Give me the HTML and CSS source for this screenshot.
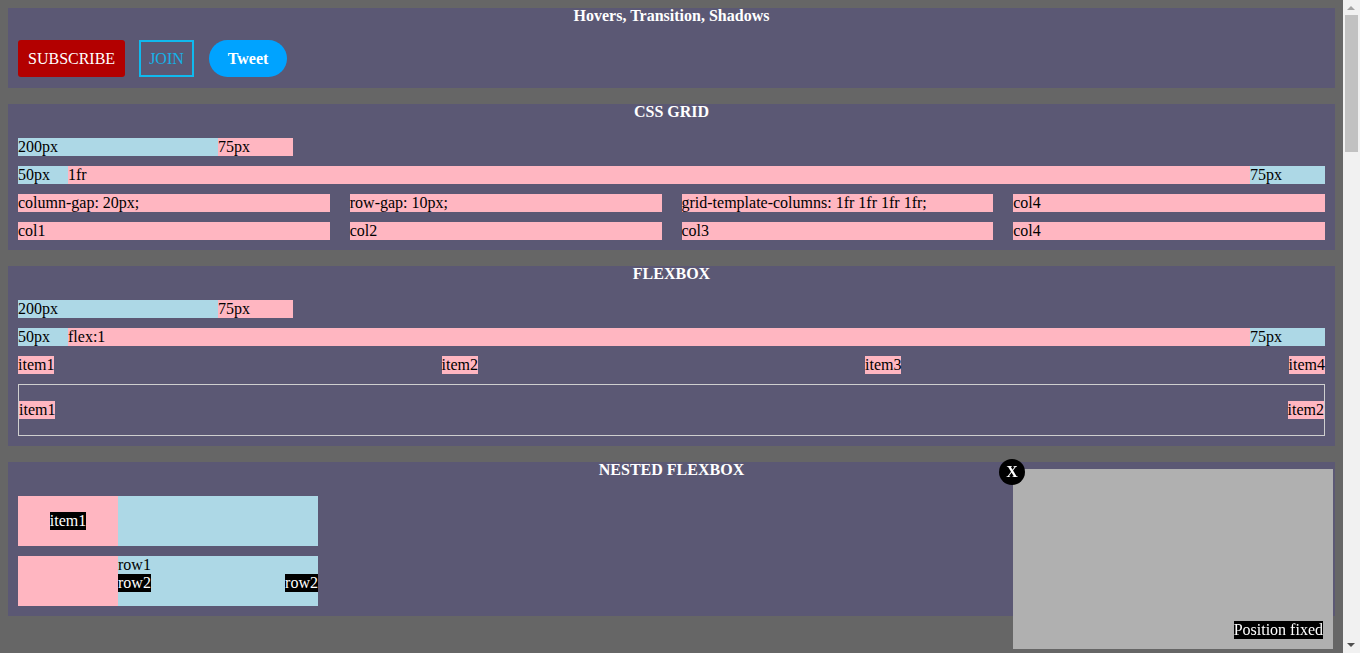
FILE: index.html
```html
<!DOCTYPE html>
<html lang="en">
<head>
<meta charset="utf-8">
<title>CSS Playground</title>
<link rel="stylesheet" href="styles.css">
</head>
<body>
  <section class="panel panel-hover">
    <h2 class="panel-title">Hovers, Transition, Shadows</h2>
    <div class="btn-row">
      <button class="btn btn-subscribe">SUBSCRIBE</button>
      <button class="btn btn-join">JOIN</button>
      <button class="btn btn-tweet">Tweet</button>
    </div>
  </section>

  <section class="panel">
    <h2 class="panel-title">CSS GRID</h2>
    <div class="grid grid-a">
      <div class="blue">200px</div>
      <div class="pink">75px</div>
    </div>
    <div class="grid grid-b">
      <div class="blue">50px</div>
      <div class="pink">1fr</div>
      <div class="blue">75px</div>
    </div>
    <div class="grid grid-c">
      <div class="pink">column-gap: 20px;</div>
      <div class="pink">row-gap: 10px;</div>
      <div class="pink">grid-template-columns: 1fr 1fr 1fr 1fr;</div>
      <div class="pink">col4</div>
      <div class="pink">col1</div>
      <div class="pink">col2</div>
      <div class="pink">col3</div>
      <div class="pink">col4</div>
    </div>
  </section>

  <section class="panel">
    <h2 class="panel-title">FLEXBOX</h2>
    <div class="flex">
      <div class="blue w200">200px</div>
      <div class="pink w75">75px</div>
    </div>
    <div class="flex">
      <div class="blue w50">50px</div>
      <div class="pink grow">flex:1</div>
      <div class="blue w75">75px</div>
    </div>
    <div class="flex between">
      <div class="pink">item1</div>
      <div class="pink">item2</div>
      <div class="pink">item3</div>
      <div class="pink">item4</div>
    </div>
    <div class="flex between boxed">
      <div class="pink">item1</div>
      <div class="pink">item2</div>
    </div>
  </section>

  <section class="panel">
    <h2 class="panel-title">NESTED FLEXBOX</h2>
    <div class="nest">
      <div class="nest-left center"><span class="tag">item1</span></div>
      <div class="nest-right"></div>
    </div>
    <div class="nest">
      <div class="nest-left"></div>
      <div class="nest-right column">
        <div class="plain">row1</div>
        <div class="split">
          <span class="tag">row2</span>
          <span class="tag">row2</span>
        </div>
      </div>
    </div>
  </section>

  <div class="fixed-box">
    <span class="close">X</span>
    <span class="tag fixed-label">Position fixed</span>
  </div>

  <div class="scrollbar" aria-hidden="true">
    <span class="sb-up"></span>
    <span class="sb-thumb"></span>
    <span class="sb-down"></span>
  </div>
</body>
</html>
```
FILE: styles.css
```css
html {
  background: #666666;
}
body {
  margin: 8px 25px 8px 8px;
  min-height: 2934px;
  font-family: "Liberation Serif", "Times New Roman", serif;
  font-size: 16px;
  line-height: 18px;
  color: #000;
}
.panel {
  background: #5b5874;
  padding: 0 10px 10px;
  margin-bottom: 16px;
}
.panel-title {
  margin: 0 0 16px;
  font-size: 16px;
  line-height: 15px;
  padding-bottom: 3px;
  font-weight: bold;
  color: #fff;
  text-align: center;
}
.panel-hover .panel-title {
  margin-bottom: 14px;
}
.panel-hover {
  padding-bottom: 11px;
}
.btn-row {
  display: flex;
  gap: 14px;
  align-items: center;
}
.btn {
  font-family: "Liberation Serif", "Times New Roman", serif;
  font-size: 16px;
  line-height: 19px;
  margin: 0;
  cursor: pointer;
}
.btn-subscribe {
  background: #b30000;
  color: #fff;
  border: none;
  border-radius: 3px;
  padding: 9px 10px;
}
.btn-join {
  background: transparent;
  color: #14b2e8;
  border: 2px solid #0fb9ee;
  padding: 7px 8px;
}
.btn-tweet {
  background: #00a3ff;
  color: #fff;
  font-weight: bold;
  border: none;
  border-radius: 19px;
  padding: 9px 19px;
  margin-left: 1px;
}
.blue { background: #add8e6; }
.pink { background: #ffb6c1; }
.grid {
  display: grid;
  margin-bottom: 10px;
}
.grid:last-child { margin-bottom: 0; }
.grid-a { grid-template-columns: 200px 75px; }
.grid-b { grid-template-columns: 50px 1fr 75px; }
.grid-c {
  grid-template-columns: 1fr 1fr 1fr 1fr;
  column-gap: 20px;
  row-gap: 10px;
}
.flex {
  display: flex;
  margin-bottom: 10px;
}
.flex:last-child { margin-bottom: 0; }
.w200 { width: 200px; }
.w75 { width: 75px; }
.w50 { width: 50px; }
.grow { flex: 1; }
.between { justify-content: space-between; }
.boxed {
  border: 1px solid #cfcfcf;
  height: 50px;
  align-items: center;
}
.nest {
  display: flex;
  height: 50px;
  margin-bottom: 10px;
}
.nest:last-child { margin-bottom: 0; }
.nest-left {
  width: 100px;
  background: #ffb6c1;
}
.nest-right {
  width: 200px;
  background: #add8e6;
}
.center {
  display: flex;
  align-items: center;
  justify-content: center;
}
.column {
  display: flex;
  flex-direction: column;
}
.split {
  display: flex;
  justify-content: space-between;
}
.tag {
  background: #000;
  color: #fff;
}
.fixed-box {
  position: fixed;
  right: 27px;
  bottom: 4px;
  width: 320px;
  height: 180px;
  background: #b0b0b0;
}
.close {
  position: absolute;
  top: -10px;
  left: -14px;
  width: 26px;
  height: 26px;
  border-radius: 50%;
  background: #000;
  color: #fff;
  font-weight: bold;
  font-size: 16px;
  line-height: 26px;
  text-align: center;
}
.fixed-label {
  position: absolute;
  right: 10px;
  bottom: 10px;
}

/* emulated classic scrollbar */
.scrollbar {
  position: fixed;
  top: 0;
  right: 0;
  width: 17px;
  height: 100%;
  background: #f1f1f1;
}
.sb-up,
.sb-down {
  position: absolute;
  left: 4px;
  width: 0;
  height: 0;
  border-left: 4.5px solid transparent;
  border-right: 4.5px solid transparent;
}
.sb-up {
  top: 6px;
  border-bottom: 4.5px solid #a3a3a3;
}
.sb-down {
  bottom: 6px;
  border-top: 4.5px solid #505050;
}
.sb-thumb {
  position: absolute;
  top: 15px;
  left: 2px;
  width: 13px;
  height: 137px;
  background: #c1c1c1;
}
```
